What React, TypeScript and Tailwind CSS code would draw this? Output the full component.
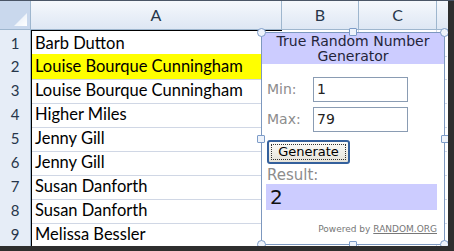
import React from 'react'

const names = [
  'Barb Dutton',
  'Louise Bourque Cunningham',
  'Louise Bourque Cunningham',
  'Higher Miles',
  'Jenny Gill',
  'Jenny Gill',
  'Susan Danforth',
  'Susan Danforth',
  'Melissa Bessler',
]

const cellFont = { fontFamily: 'Lato, "Open Sans", sans-serif' }
const boxFont = { fontFamily: '"DejaVu Sans", Verdana, sans-serif' }

// Grid column widths: row header | A | B | C | D sliver
const Cols: React.FC<{ children: React.ReactNode; className?: string }> = ({ children, className }) => (
  <div className={`grid grid-cols-[31px_251px_77px_78px_10px] ${className ?? ''}`} style={cellFont}>
    {children}
  </div>
)

const HeaderRow = () => (
  <Cols className="h-[29px] bg-gradient-to-b from-[#f5f8fc] to-[#dee7f4] border-b border-[#9eb6ce] text-[#27364a] text-[16px]">
    <div className="relative bg-[#c9d8ed] border-r border-[#9eb6ce]">
      <svg className="absolute right-[3px] bottom-[3px]" width="13" height="13" viewBox="0 0 13 13">
        <defs>
          <linearGradient id="tri" x1="0" y1="0" x2="1" y2="1">
            <stop offset="0" stopColor="#dfe9f6" />
            <stop offset="1" stopColor="#ffffff" />
          </linearGradient>
        </defs>
        <polygon points="13,0 13,13 0,13" fill="url(#tri)" />
      </svg>
    </div>
    <div className="flex items-center justify-center border-r border-[#9eb6ce]">A</div>
    <div className="flex items-center justify-center border-r border-[#9eb6ce]">B</div>
    <div className="flex items-center justify-center border-r border-[#9eb6ce]">C</div>
    <div />
  </Cols>
)

const Handle: React.FC<{ round?: boolean; className: string }> = ({ round, className }) => (
  <div
    className={`absolute bg-[#eef3fb] border border-[#7d9cc8] ${round ? 'w-[9px] h-[9px] rounded-full' : 'w-[8px] h-[8px] rounded-[1px]'} ${className}`}
  />
)

const Widget = () => (
  <div
    className="absolute left-[261px] top-[31px] w-[184px] h-[213px] bg-white border border-[#7d98bf] flex flex-col"
    style={boxFont}
  >
    <div className="h-[31px] bg-[#ccccff] text-[14px] leading-[15px] text-[#24243a] text-center pt-[1px]">
      True Random Number
      <br />
      Generator
    </div>
    <div className="flex flex-col px-[4px] pt-[13px]">
      <div className="flex items-center h-[25px]">
        <span className="w-[47px] pl-[1px] text-[14px] text-[#8c8c8c]">Min:</span>
        <div className="w-[95px] h-[25px] border border-[#8a9cb3] flex items-center pl-[3px] text-[14px] text-[#222]">1</div>
      </div>
      <div className="flex items-center h-[25px] mt-[5px]">
        <span className="w-[47px] pl-[1px] text-[14px] text-[#8c8c8c]">Max:</span>
        <div className="w-[95px] h-[25px] border border-[#8a9cb3] flex items-center pl-[3px] text-[14px] text-[#222]">79</div>
      </div>
      <div className="mt-[8px] ml-[1px] w-[83px] h-[24px] rounded-[3px] border-2 border-[#34609c] bg-gradient-to-b from-[#fbfbf8] to-[#e6e3d9] p-[2px]">
        <div className="h-full border border-dotted border-[#333] flex items-center justify-center text-[13px] text-black">
          Generate
        </div>
      </div>
      <div className="mt-[2px] text-[15px] leading-[18px] text-[#8c8c8c] pl-[1px]">Result:</div>
      <div className="h-[26px] w-[171px] bg-[#ccccff] flex items-center pl-[4px] text-[20px] text-[#111]">2</div>
      <div className="mt-[13px] pr-[3px] text-right text-[9px] text-[#777]">
        Powered by <span className="underline">RANDOM.ORG</span>
      </div>
    </div>
    <Handle round className="-left-[5px] -top-[5px]" />
    <Handle className="left-[87px] -top-[5px]" />
    <Handle round className="-right-[5px] -top-[5px]" />
    <Handle className="-left-[5px] top-[102px]" />
    <Handle className="-right-[5px] top-[102px]" />
    <Handle round className="-left-[5px] -bottom-[5px]" />
    <Handle className="left-[87px] -bottom-[5px]" />
    <Handle round className="-right-[5px] -bottom-[5px]" />
  </div>
)

export default function App() {
  return (
    <div className="w-[454px] h-[251px] overflow-hidden bg-[#2e2e2e] flex flex-col">
      <div className="h-[1px] bg-[#4a5566]" />
      <div className="flex flex-1">
        <div className="w-[448px] h-[245px] bg-white relative overflow-hidden">
          <HeaderRow />
          {names.map((name, i) => (
            <Cols key={i} className="h-[24px]">
              <div className="flex items-center justify-center bg-[#e6edf7] border-r border-b border-[#9eb6ce] text-[15px] text-[#27364a]">
                {i + 1}
              </div>
              <div
                className={`flex items-center pl-[3px] border-l border-l-black border-b border-b-[#d0d7e5] text-[16.5px] text-black whitespace-nowrap ${i === 0 ? 'border-t border-t-black' : ''} ${i === 1 ? 'bg-[#ffff00]' : ''}`}
              >
                {name}
              </div>
              <div className="border-r border-b border-[#d0d7e5]" />
              <div className="border-r border-b border-[#d0d7e5]" />
              <div className="border-b border-[#d0d7e5]" />
            </Cols>
          ))}
          <Widget />
        </div>
      </div>
    </div>
  )
}
